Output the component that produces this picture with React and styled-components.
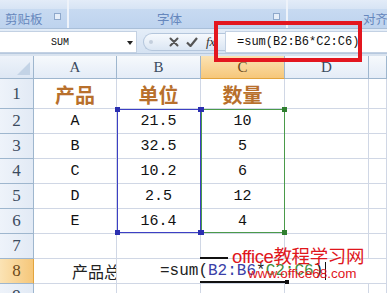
import React from "react";
import styled, { createGlobalStyle } from "styled-components";

const Global = createGlobalStyle`
  html, body { margin: 0; padding: 0; background: #fff; }
  body { width: 387px; height: 293px; overflow: hidden; font-family: "Liberation Sans", "Noto Sans CJK SC", sans-serif; }
`;

const Page = styled.div`
  position: relative;
  width: 387px;
  height: 293px;
  overflow: hidden;
  background: #fff;
`;

const Ribbon = styled.div`
  display: flex;
  height: 29px;
  background: #c4d7ef;
  border-bottom: 1px solid #a9bfd9;
  box-sizing: border-box;
`;

const Group = styled.div`
  position: relative;
  width: ${(p) => p.$w}px;
  flex: ${(p) => (p.$w ? "none" : 1)};
  min-width: 0;
  display: flex;
  flex-direction: column;
  overflow: hidden;
  border-right: ${(p) => (p.$last ? "none" : "2px solid #eef3fa")};
  box-shadow: ${(p) => (p.$last ? "none" : "1px 0 0 #9fb7d6")};
`;

const GroupBody = styled.div`
  height: 10px;
  background: linear-gradient(#e3ecf8, #d7e4f4);
`;

const GroupLabel = styled.div`
  flex: 1;
  display: flex;
  align-items: center;
  justify-content: flex-start;
  padding-left: ${(p) => p.$pad}px;
  white-space: nowrap;
  font-family: "Noto Sans CJK SC", sans-serif;
  font-size: 12.5px;
  color: #6687bd;
  background: linear-gradient(#c7daf1, #bed3ee);
`;

const Launcher = styled.span`
  position: absolute;
  right: 6px;
  bottom: 8px;
  width: 5px;
  height: 5px;
  border: 1px solid #8ea8cb;
  background: #e6eef9;
`;

const FormulaBar = styled.div`
  display: flex;
  align-items: stretch;
  height: 25px;
  background: linear-gradient(#e4edf8, #d5e2f2);
  padding-top: 2px;
  box-sizing: border-box;
  border-bottom: 1px solid #b6c8de;
`;

const NameBox = styled.div`
  width: 137px;
  background: #fff;
  display: flex;
  align-items: center;
  position: relative;
  border: 1px solid #c3d1e3;
  border-left: none;
  box-sizing: border-box;
  font-family: "Liberation Mono", monospace;
  font-size: 10px;
  color: #111;
  padding-left: 51px;
`;

const DropArrow = styled.span`
  position: absolute;
  right: 3px;
  top: 9px;
  width: 0;
  height: 0;
  border-left: 3.5px solid transparent;
  border-right: 3.5px solid transparent;
  border-top: 4px solid #222;
`;

const Pill = styled.div`
  margin: 2px 0 2px 6px;
  width: 82px;
  border-radius: 10px 0 0 10px;
  background: linear-gradient(#f6f9fd, #dbe6f3);
  border: 1px solid #b4c6dc;
  border-right: none;
  display: flex;
  align-items: center;
  gap: 7px;
  padding-left: 5px;
  box-sizing: border-box;
`;

const Dot = styled.span`
  width: 4px;
  height: 4px;
  border-radius: 50%;
  background: #c4cfdd;
  margin-right: 9px;
`;

const Fx = styled.span`
  font-family: "Liberation Serif", serif;
  font-style: italic;
  font-size: 13px;
  color: #333;
  margin-left: 1px;
`;

const FormulaInput = styled.div`
  flex: 1;
  background: #fff;
  border: 1px solid #c3d1e3;
  border-right: none;
  box-sizing: border-box;
  display: flex;
  align-items: center;
  padding-left: 11px;
  font-family: "Liberation Mono", monospace;
  font-size: 12px;
  color: #111;
`;

const Spacer = styled.div`
  height: 2px;
  background: #d9e3ef;
`;

const SheetWrap = styled.div`
  position: relative;
`;

const Sheet = styled.div`
  display: grid;
  grid-template-columns: 34px 83px 84px 84px 84px 1fr;
  grid-template-rows: 23px 30px repeat(8, 25px);
`;

const Corner = styled.div`
  position: relative;
  background: linear-gradient(#eef3fa, #dde7f4);
  border-right: 1px solid #9eb6ce;
  border-bottom: 1px solid #9eb6ce;
  &::after {
    content: "";
    position: absolute;
    right: 3px;
    bottom: 3px;
    width: 0;
    height: 0;
    border-left: 13px solid transparent;
    border-bottom: 13px solid #c3d3e6;
  }
`;

const ColHead = styled.div`
  display: flex;
  align-items: center;
  justify-content: center;
  font-family: "Liberation Serif", serif;
  font-size: 15px;
  color: ${(p) => (p.$active ? "#6b4a1a" : "#3b4a5e")};
  background: ${(p) =>
    p.$active
      ? "linear-gradient(#fbe3b4, #f6c77a)"
      : "linear-gradient(#f6f9fc, #e4ecf7)"};
  border-right: 1px solid #9eb6ce;
  border-bottom: 1px solid ${(p) => (p.$active ? "#e2a43e" : "#9eb6ce")};
`;

const RowHead = styled.div`
  display: flex;
  align-items: center;
  justify-content: center;
  font-family: "Liberation Serif", serif;
  font-size: 17px;
  color: ${(p) => (p.$active ? "#6b4a1a" : "#3b4a5e")};
  background: ${(p) =>
    p.$active
      ? "linear-gradient(90deg, #fbe3b4, #f6c77a)"
      : "linear-gradient(90deg, #eef3fa, #e2eaf5)"};
  border-right: 1px solid ${(p) => (p.$active ? "#e2a43e" : "#9eb6ce")};
  border-bottom: 1px solid #9eb6ce;
`;

const Cell = styled.div`
  display: flex;
  align-items: center;
  justify-content: center;
  overflow: hidden;
  white-space: nowrap;
  border-right: 1px solid #d0d7e5;
  border-bottom: 1px solid #d0d7e5;
  font-family: "Liberation Mono", "Noto Sans CJK SC", monospace;
  font-size: 15px;
  color: #111;
`;

const TitleCell = styled(Cell)`
  font-family: "Noto Sans CJK SC", sans-serif;
  font-weight: 700;
  font-size: 20px;
  color: #b8702c;
  padding-top: 2px;
`;

const LabelCell = styled(Cell)`
  justify-content: flex-start;
  padding-left: 38px;
  font-family: "Noto Sans CJK SC", sans-serif;
  font-size: 16px;
  color: #222;
`;

const EditCell = styled.div`
  grid-column: 3 / 6;
  display: flex;
  align-items: center;
  padding-left: 43px;
  background: #fff;
  border-bottom: 1px solid #d0d7e5;
  font-family: "Liberation Mono", monospace;
  font-size: 16px;
  color: #222;
  white-space: nowrap;
`;

const Ref = styled.span`
  color: ${(p) => p.$c};
`;

const Caret = styled.span`
  display: inline-block;
  width: 1px;
  height: 18px;
  background: #111;
  margin-left: 2px;
`;

const RangeBox = styled.div`
  position: absolute;
  left: ${(p) => p.$x}px;
  top: 53px;
  width: 84px;
  height: 124px;
  border: 1px solid ${(p) => p.$c};
  box-sizing: border-box;
  pointer-events: none;
`;

const Handle = styled.span`
  position: absolute;
  width: 5px;
  height: 5px;
  background: ${(p) => p.$c};
  left: ${(p) => (p.$r ? "auto" : "-3px")};
  right: ${(p) => (p.$r ? "-3px" : "auto")};
  top: ${(p) => (p.$b ? "auto" : "-3px")};
  bottom: ${(p) => (p.$b ? "-3px" : "auto")};
`;

const Stroke = styled.div`
  position: absolute;
  left: ${(p) => p.$x}px;
  top: ${(p) => p.$y}px;
  width: ${(p) => p.$w}px;
  height: 2px;
  background: #111;
  &::after {
    content: "";
    display: ${(p) => (p.$end ? "block" : "none")};
    position: absolute;
    right: -2px;
    top: -1px;
    width: 4px;
    height: 4px;
    background: #111;
  }
`;

const Highlight = styled.div`
  position: absolute;
  left: 214px;
  top: 21px;
  width: 148px;
  height: 41px;
  border: 4px solid #e3161f;
  box-sizing: border-box;
  pointer-events: none;
`;

const Watermark = styled.div`
  position: absolute;
  left: 232px;
  top: 248px;
  color: #e0161c;
  pointer-events: none;
  line-height: 1;
`;

const WmTitle = styled.div`
  font-family: "Liberation Sans", "Noto Sans CJK SC", sans-serif;
  font-size: 18.5px;
  letter-spacing: -0.4px;
`;

const WmUrl = styled.div`
  font-family: "Liberation Sans", sans-serif;
  font-size: 13.5px;
  margin: 0 0 0 16px;
  line-height: 14px;
`;

const cols = ["A", "B", "C", "D", ""];
const data = [
  ["A", "21.5", "10"],
  ["B", "32.5", "5"],
  ["C", "10.2", "6"],
  ["D", "2.5", "12"],
  ["E", "16.4", "4"],
];

const XIcon = () => (
  <svg width="10" height="10" viewBox="0 0 10 10">
    <path d="M1.5 1.5 L8.5 8.5 M8.5 1.5 L1.5 8.5" stroke="#555" strokeWidth="2" strokeLinecap="round" />
  </svg>
);

const CheckIcon = () => (
  <svg width="12" height="10" viewBox="0 0 12 10">
    <path d="M1 5.5 L4.5 9 L11 1" stroke="#555" strokeWidth="2.2" fill="none" strokeLinejoin="round" />
  </svg>
);

export default function App() {
  return (
    <Page>
      <Global />
      <Ribbon>
        <Group $w={67}>
          <GroupBody />
          <GroupLabel $pad={5}>剪贴板</GroupLabel>
          <Launcher />
        </Group>
        <Group $w={217}>
          <GroupBody />
          <GroupLabel $pad={88}>字体</GroupLabel>
          <Launcher />
        </Group>
        <Group $last>
          <GroupBody />
          <GroupLabel $pad={75}>对齐方</GroupLabel>
        </Group>
      </Ribbon>
      <FormulaBar>
        <NameBox>
          SUM
          <DropArrow />
        </NameBox>
        <Pill>
          <Dot />
          <XIcon />
          <CheckIcon />
          <Fx>fx</Fx>
        </Pill>
        <FormulaInput>=sum(B2:B6*C2:C6)</FormulaInput>
      </FormulaBar>
      <Spacer />
      <SheetWrap>
        <Sheet>
          <Corner />
          {cols.map((c, i) => (
            <ColHead key={i} $active={c === "C"}>
              {c}
            </ColHead>
          ))}
          <RowHead>1</RowHead>
          <TitleCell>产品</TitleCell>
          <TitleCell>单位</TitleCell>
          <TitleCell>数量</TitleCell>
          <Cell />
          <Cell />
          {data.map((r, i) => (
            <React.Fragment key={i}>
              <RowHead>{i + 2}</RowHead>
              <Cell>{r[0]}</Cell>
              <Cell>{r[1]}</Cell>
              <Cell>{r[2]}</Cell>
              <Cell />
              <Cell />
            </React.Fragment>
          ))}
          <RowHead>7</RowHead>
          <Cell />
          <Cell />
          <Cell />
          <Cell />
          <Cell />
          <RowHead $active>8</RowHead>
          <LabelCell>产品总</LabelCell>
          <EditCell>
            =sum(<Ref $c="#3b3fa8">B2:B6</Ref>*<Ref $c="#3f8f3f">C2:C6</Ref>)
            <Caret />
          </EditCell>
          <Cell />
          <RowHead>9</RowHead>
          <Cell />
          <Cell />
          <Cell />
          <Cell />
          <Cell />
        </Sheet>
        <RangeBox $x={117} $c="#3d3fc4">
          <Handle $c="#2b2fb0" />
          <Handle $c="#2b2fb0" $r />
          <Handle $c="#2b2fb0" $b />
          <Handle $c="#2b2fb0" $r $b />
        </RangeBox>
        <RangeBox $x={201} $c="#4a9a4a">
          <Handle $c="#2b2fb0" />
          <Handle $c="#2f7f2f" $r />
          <Handle $c="#2b2fb0" $b />
          <Handle $c="#2f7f2f" $r $b />
        </RangeBox>
        <Stroke $x={200} $y={201} $w={28} />
        <Stroke $x={200} $y={225} $w={87} $end />
      </SheetWrap>
      <Highlight />
      <Watermark>
        <WmTitle>office教程学习网</WmTitle>
        <WmUrl>www.office68.com</WmUrl>
      </Watermark>
    </Page>
  );
}
